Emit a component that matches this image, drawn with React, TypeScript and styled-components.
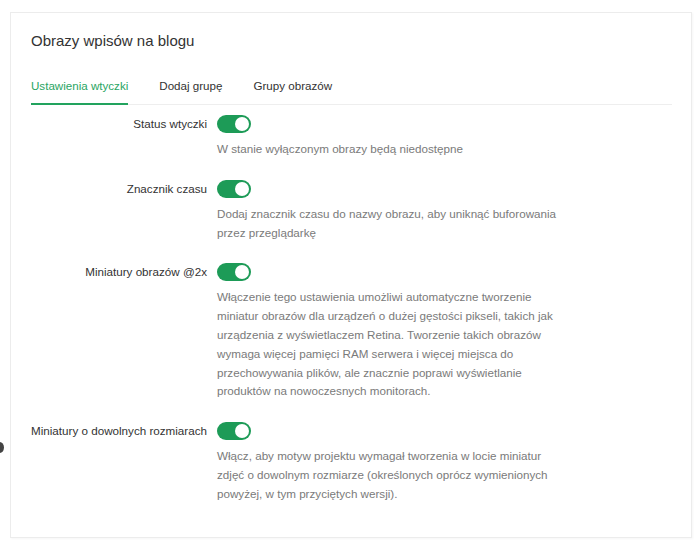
import React from "react";
import styled, { createGlobalStyle } from "styled-components";

const Global = createGlobalStyle`
  html, body { margin: 0; padding: 0; background: #fff; }
  body { font-family: "Liberation Sans", Arial, sans-serif; }
  * { box-sizing: border-box; }
`;

const Page = styled.div`
  position: relative;
  width: 700px;
  height: 545px;
  padding: 12px 8px 7px 10px;
  overflow: hidden;
`;

const EdgeDot = styled.div`
  position: absolute;
  left: -5px;
  top: 442px;
  width: 9px;
  height: 11px;
  border-radius: 50%;
  background: #444;
`;

const Card = styled.div`
  height: 100%;
  border: 1px solid #ececec;
  box-shadow: 1px 1px 2px rgba(0, 0, 0, 0.04);
  background: #fff;
  padding: 18px 19px 0 20px;
`;

const Title = styled.h2`
  margin: 0;
  font-size: 15px;
  font-weight: 400;
  color: #333;
  line-height: 19px;
`;

const Tabs = styled.div`
  display: flex;
  margin-top: 28px;
  border-bottom: 1px solid #eee;
  gap: 31px;
`;

const Tab = styled.div<{ $active?: boolean }>`
  font-size: 11.6px;
  line-height: 15px;
  padding: 0 0 10px;
  color: ${(p) => (p.$active ? "#2aa563" : "#333")};
  border-bottom: 2px solid ${(p) => (p.$active ? "#22a35e" : "transparent")};
  margin-bottom: -1px;
`;

const Rows = styled.div`
  display: flex;
  flex-direction: column;
  gap: 21px;
  padding-top: 10px;
`;

const Row = styled.div`
  display: grid;
  grid-template-columns: 176px 1fr;
  column-gap: 10px;
`;

const Label = styled.div`
  font-size: 11.65px;
  color: #333;
  text-align: right;
  line-height: 18px;
  white-space: nowrap;
`;

const Control = styled.div`
  display: flex;
  flex-direction: column;
  gap: 7px;
`;

const Switch = styled.div<{ $on?: boolean }>`
  position: relative;
  width: 34px;
  height: 18px;
  border-radius: 9px;
  background: ${(p) => (p.$on ? "#1d9b57" : "#ccc")};
  &::after {
    content: "";
    position: absolute;
    top: 2px;
    left: ${(p) => (p.$on ? "18px" : "2px")};
    width: 14px;
    height: 14px;
    border-radius: 50%;
    background: #fff;
  }
`;

const Desc = styled.div`
  font-size: 11.65px;
  color: #7a7a7a;
  line-height: 18.8px;
  max-width: 345px;
`;

const settings = [
  {
    label: "Status wtyczki",
    desc: "W stanie wyłączonym obrazy będą niedostępne",
  },
  {
    label: "Znacznik czasu",
    desc: "Dodaj znacznik czasu do nazwy obrazu, aby uniknąć buforowania przez przeglądarkę",
  },
  {
    label: "Miniatury obrazów @2x",
    desc: "Włączenie tego ustawienia umożliwi automatyczne tworzenie miniatur obrazów dla urządzeń o dużej gęstości pikseli, takich jak urządzenia z wyświetlaczem Retina. Tworzenie takich obrazów wymaga więcej pamięci RAM serwera i więcej miejsca do przechowywania plików, ale znacznie poprawi wyświetlanie produktów na nowoczesnych monitorach.",
  },
  {
    label: "Miniatury o dowolnych rozmiarach",
    desc: "Włącz, aby motyw projektu wymagał tworzenia w locie miniatur zdjęć o dowolnym rozmiarze (określonych oprócz wymienionych powyżej, w tym przyciętych wersji).",
  },
];

export default function App() {
  return (
    <Page>
      <Global />
      <EdgeDot />
      <Card>
        <Title>Obrazy wpisów na blogu</Title>
        <Tabs>
          <Tab $active>Ustawienia wtyczki</Tab>
          <Tab>Dodaj grupę</Tab>
          <Tab>Grupy obrazów</Tab>
        </Tabs>
        <Rows>
          {settings.map((s) => (
            <Row key={s.label}>
              <Label>{s.label}</Label>
              <Control>
                <Switch $on />
                <Desc>{s.desc}</Desc>
              </Control>
            </Row>
          ))}
        </Rows>
      </Card>
    </Page>
  );
}
